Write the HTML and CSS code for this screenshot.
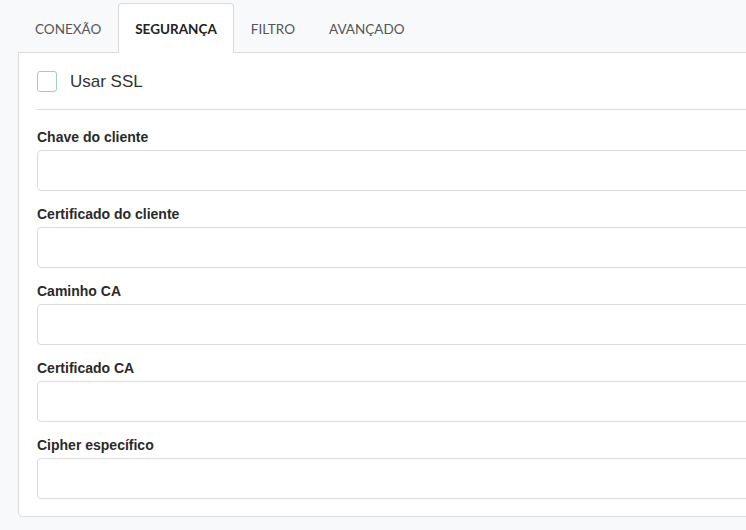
FILE: index.html
```html
<!DOCTYPE html>
<html lang="pt">
<head>
<meta charset="utf-8">
<link rel="stylesheet" href="styles.css">
</head>
<body>
<div class="wrap">
  <div class="tabs">
    <div class="tab">CONEXÃO</div>
    <div class="tab active">SEGURANÇA</div>
    <div class="tab">FILTRO</div>
    <div class="tab">AVANÇADO</div>
  </div>
  <div class="panel">
    <label class="check-row">
      <span class="checkbox"></span>
      <span class="check-label">Usar SSL</span>
    </label>
    <div class="sep"></div>
    <div class="field">
      <div class="label">Chave do cliente</div>
      <div class="input"></div>
    </div>
    <div class="field">
      <div class="label">Certificado do cliente</div>
      <div class="input"></div>
    </div>
    <div class="field">
      <div class="label">Caminho CA</div>
      <div class="input"></div>
    </div>
    <div class="field">
      <div class="label">Certificado CA</div>
      <div class="input"></div>
    </div>
    <div class="field">
      <div class="label">Cipher específico</div>
      <div class="input"></div>
    </div>
  </div>
</div>
</body>
</html>
```
FILE: styles.css
```css
html, body {
  margin: 0;
  padding: 0;
  overflow: hidden;
  background: #f8f9fb;
}
.wrap {
  padding: 3px 0 0 18px;
  width: 800px;
}
.tabs {
  display: flex;
  position: relative;
  z-index: 1;
}
.tab {
  font-family: Lato, "Liberation Sans", sans-serif;
  font-size: 13.5px;
  line-height: 16px;
  color: #555;
  padding: 17px 16px 15px;
  border: 1px solid transparent;
  border-bottom: none;
  border-radius: 4px 4px 0 0;
  margin-bottom: -1px;
}
.tab.active {
  background: #fff;
  border-color: #dcdcdc;
  color: #222;
  font-weight: bold;
  padding-bottom: 16px;
}
.panel {
  background: #fff;
  border: 1px solid #dcdcdc;
  border-radius: 0 0 4px 4px;
  padding: 18px 0 17px 18px;
  font-family: "Liberation Sans", Arial, sans-serif;
}
.check-row {
  display: flex;
  align-items: center;
  gap: 13px;
  height: 21px;
}
.checkbox {
  border: 1px solid #9fcbd8;
  border-radius: 3px;
  width: 18px;
  height: 19px;
}
.check-label {
  font-size: 17px;
  color: #333;
}
.sep {
  height: 1px;
  background: #dcdcdc;
  margin: 17px 0 19px;
}
.field + .field {
  margin-top: 15px;
}
.label {
  font-size: 14px;
  font-weight: bold;
  color: #2a2a2a;
  line-height: 16px;
  margin-bottom: 5px;
}
.input {
  height: 39px;
  border: 1px solid #dcdcdc;
  border-radius: 4px;
  background: #fff;
}
```
